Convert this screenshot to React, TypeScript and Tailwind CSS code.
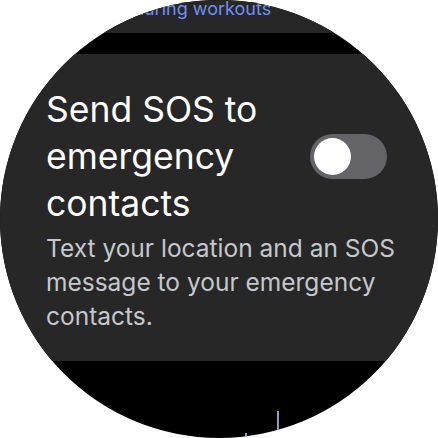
export default function App() {
  return (
    <div className="w-[438px] h-[438px] bg-white">
      <div
        className="relative w-[438px] h-[438px] rounded-full overflow-hidden bg-black flex flex-col"
        style={{ fontFamily: "Inter, 'Noto Sans', sans-serif" }}
      >
        <div className="h-[33px] bg-[#272727] flex items-end px-[46px] pb-[14px] shrink-0">
          <span className="text-[18px] leading-[20px] text-[#6f8ff2] whitespace-nowrap">
            Detecting during workouts
          </span>
        </div>

        <div className="mt-[21px] h-[307px] bg-[#272727] shrink-0 pl-[46px] pr-[34px] pt-[32px]">
          <div className="flex items-center justify-between">
            <h1 className="text-[35.5px] leading-[47px] text-white">
              Send SOS to
              <br />
              emergency
              <br />
              contacts
            </h1>
            <div className="w-[77px] h-[45px] rounded-full bg-[#646368] flex items-center pl-[4px] mr-[17px]">
              <div className="w-[37px] h-[37px] rounded-full bg-white" />
            </div>
          </div>
          <p className="mt-[4px] text-[24.5px] leading-[34px] text-[#c5c8cd]">
            Text your location and an SOS message to your emergency contacts.
          </p>
        </div>

        <div className="absolute left-[277px] top-[411px] w-[2px] h-[20px] bg-[#8a9cc8]" />
        <div className="absolute left-[245px] top-[433px] w-[2px] h-[6px] bg-[#8a9cc8]" />
      </div>
    </div>
  );
}
